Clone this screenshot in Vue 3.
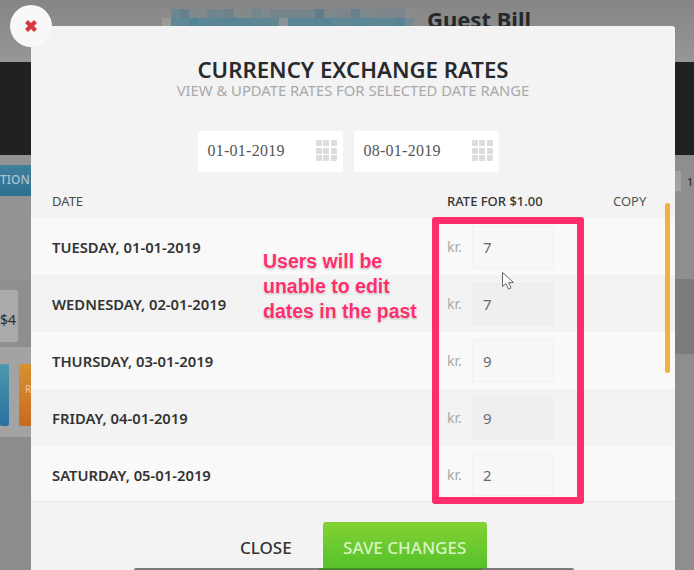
<template>
	<div class="screen">
		<!-- page behind the dialog -->
		<div class="backdrop">
			<div class="page-head">
				<div class="pixel-name">
					<div v-for="(row, r) in pixelRows" :key="r" class="pixel-row">
						<span
							v-for="(color, i) in row"
							:key="i"
							class="pixel"
							:style="{ background: color }"
						></span>
					</div>
				</div>
				<h2 class="guest-bill">Guest Bill</h2>
			</div>
			<div class="dark-band"></div>
			<div class="page-rest">
				<div class="left-side">
					<div class="tab-button">TION</div>
					<div class="price-card">$4</div>
					<div class="tiles">
						<div class="tile blue"></div>
						<div class="tile orange">R</div>
					</div>
				</div>
				<div class="right-side">
					<div class="page-chip"><span class="chip-box"></span>1</div>
					<div class="shade-band"></div>
				</div>
			</div>
		</div>

		<!-- dialog -->
		<div class="modal">
			<header class="modal-head">
				<h1 class="modal-title">CURRENCY EXCHANGE RATES</h1>
				<p class="modal-sub">VIEW &amp; UPDATE RATES FOR SELECTED DATE RANGE</p>
			</header>

			<div class="date-range">
				<div v-for="d in rangeDates" :key="d" class="date-input">
					<span class="date-value">{{ d }}</span>
					<span class="grid-icon"><i v-for="n in 9" :key="n"></i></span>
				</div>
			</div>

			<div class="table-head">
				<span class="col-date">DATE</span>
				<span class="col-rate">RATE FOR $1.00</span>
				<span class="col-copy">COPY</span>
			</div>

			<div class="table-body">
				<div
					v-for="(row, i) in rates"
					:key="row.date"
					class="rate-row"
					:class="{ odd: i % 2 === 1 }"
				>
					<span class="row-date">{{ row.date }}</span>
					<span class="currency">kr.</span>
					<span class="rate-input">{{ row.rate }}</span>
				</div>
			</div>

			<div class="scroll-thumb"></div>

			<footer class="modal-foot">
				<button class="close-btn">CLOSE</button>
				<button class="save-btn">SAVE CHANGES</button>
			</footer>

			<!-- annotation on top of the screenshot -->
			<div class="note-box"></div>
			<p class="note-text">Users will be<br />unable to edit<br />dates in the past</p>
			<svg class="cursor" width="16" height="22" viewBox="0 0 16 22">
				<path
					d="M1.5 1.5 L1.5 15.5 L5 12.5 L7.5 18 L10 17 L7.6 11.6 L12.5 11.5 Z"
					fill="#fff"
					stroke="#666"
					stroke-width="1"
					stroke-linejoin="round"
				/>
			</svg>
		</div>

		<button class="dismiss" aria-label="Close">
			<svg width="14" height="14" viewBox="0 0 14 14">
				<path
					d="M4 1 L7 4 L10 1 L13 4 L10 7 L13 10 L10 13 L7 10 L4 13 L1 10 L4 7 L1 4 Z"
					fill="#d8393c"
				/>
			</svg>
		</button>
		<div class="bottom-edge"></div>
	</div>
</template>

<script setup>
	const rangeDates = ["01-01-2019", "08-01-2019"];

	const rates = [
		{ date: "TUESDAY, 01-01-2019", rate: 7 },
		{ date: "WEDNESDAY, 02-01-2019", rate: 7 },
		{ date: "THURSDAY, 03-01-2019", rate: 9 },
		{ date: "FRIDAY, 04-01-2019", rate: 9 },
		{ date: "SATURDAY, 05-01-2019", rate: 2 },
	];

	// blurred out property name in the page header
	const pixelRows = [
		[
			"#8b8b8b", "#6b8791", "#64808a", "#81898c", "#82898c", "#6d858e", "#73868d", "#6c838c",
			"#84898b", "#82888b", "#72868e", "#7f888b", "#76858c", "#76858c", "#75858c", "#76858c",
			"#76858c", "#5f7d89", "#7f888b", "#7c878b", "#7b868b", "#66818b", "#7e878a", "#7f878a",
			"#7d868a", "#7d868a", "#7d868a", "#8b8b8b",
		],
		[
			"#9a9a9a", "#5f8796", "#5f8796", "#4f8496", "#5c8695", "#5c8695", "#5c8695", "#598494",
			"#598494", "#5b8695", "#5b8695", "#5b8695", "#648693", "#8b9497", "#5a8696", "#5a8696",
			"#5d8695", "#588595", "#588595", "#5e8797", "#5e8797", "#5b8696", "#5b8696", "#5e8796",
			"#5e8796", "#5e8796", "#568494", "#728a93",
		],
	];
</script>

<style scoped>
	.screen {
		position: relative;
		width: 694px;
		height: 570px;
		overflow: hidden;
		background: #8f8f8f;
		font-family: "Noto Sans", "Open Sans", sans-serif;
	}

	/* ---- page behind ---- */
	.backdrop {
		display: flex;
		flex-direction: column;
		height: 570px;
	}

	.page-head {
		display: flex;
		gap: 13px;
		height: 62px;
		box-sizing: border-box;
		padding: 9px 0 0 162px;
		background: linear-gradient(#858585, #979797);
	}

	.pixel-name {
		width: 252px;
	}

	.pixel-row {
		display: flex;
	}

	.pixel {
		width: 9px;
		height: 9px;
		flex-shrink: 0;
	}

	.guest-bill {
		margin: -2px 0 0;
		font-size: 22px;
		line-height: 24px;
		font-weight: 700;
		color: #25292b;
		white-space: nowrap;
	}

	.dark-band {
		height: 93px;
		background: #1f2123;
	}

	.page-rest {
		flex: 1;
		display: flex;
		justify-content: space-between;
		background: #8e8e8e;
	}

	.left-side {
		width: 31px;
		overflow: hidden;
		background: linear-gradient(
			#939393 0 125px,
			#8f8f8f 125px 192px,
			#a3a3a3 192px 282px,
			#8c8c8c 282px
		);
	}

	.tab-button {
		height: 31px;
		margin-top: 10px;
		padding-right: 2px;
		background: linear-gradient(#3f7f9c, #2f6f92);
		color: #a9c6d3;
		font-size: 12px;
		font-weight: 500;
		line-height: 29px;
		text-align: right;
		white-space: nowrap;
	}

	.price-card {
		width: 18px;
		height: 52px;
		margin-top: 94px;
		box-sizing: border-box;
		padding: 20px 5px 0 0;
		background: #aaaaaa;
		border-radius: 0 2px 2px 0;
		font-size: 14px;
		line-height: 20px;
		color: #2e2e2e;
		text-align: right;
		overflow: hidden;
		white-space: nowrap;
	}

	.tiles {
		display: flex;
		gap: 10px;
		margin-top: 22px;
	}

	.tile {
		height: 62px;
		border-radius: 2px;
	}

	.tile.blue {
		width: 9px;
		flex-shrink: 0;
		background: linear-gradient(#4b99ad, #2b6f9f);
	}

	.tile.orange {
		width: 20px;
		flex-shrink: 0;
		padding-left: 6px;
		box-sizing: border-box;
		background: linear-gradient(#d8902f, #c76b21);
		color: #e6c9a7;
		font-size: 10px;
		line-height: 50px;
		overflow: hidden;
	}

	.right-side {
		width: 19px;
	}

	.page-chip {
		display: flex;
		align-items: center;
		gap: 6px;
		height: 20px;
		margin-top: 16px;
		font-size: 11px;
		color: #222;
	}

	.chip-box {
		width: 6px;
		height: 20px;
		background: #a2a2a2;
	}

	.shade-band {
		height: 75px;
		margin-top: 88px;
		background: #7c7c7c;
	}

	/* ---- dialog ---- */
	.modal {
		position: absolute;
		left: 31px;
		top: 26px;
		display: flex;
		flex-direction: column;
		width: 644px;
		height: 544px;
		overflow: hidden;
		background: #f3f3f3;
		border-radius: 3px 3px 0 0;
	}

	.modal > * {
		flex-shrink: 0;
	}

	.modal-head {
		padding-top: 32px;
		text-align: center;
	}

	.modal-title {
		margin: 0;
		font-size: 22.2px;
		line-height: 24px;
		font-weight: 600;
		color: #27292b;
	}

	.modal-sub {
		margin: 0;
		font-size: 14.8px;
		line-height: 16px;
		font-weight: 400;
		color: #a9a9a9;
	}

	.date-range {
		display: flex;
		justify-content: center;
		gap: 11px;
		margin-top: 33px;
		padding-right: 10px;
	}

	.date-input {
		display: flex;
		align-items: center;
		justify-content: space-between;
		width: 145px;
		height: 41px;
		box-sizing: border-box;
		padding: 0 6px 2px 10px;
		background: #fff;
		border-radius: 2px;
	}

	.date-value {
		font-family: "Liberation Serif", serif;
		font-size: 16px;
		color: #555;
		letter-spacing: 0.25px;
	}

	.grid-icon {
		display: grid;
		grid-template-columns: repeat(3, 6px);
		grid-auto-rows: 6px;
		gap: 1.5px;
	}

	.grid-icon i {
		background: #dcdcdc;
		border-radius: 1px;
	}

	.table-head {
		display: flex;
		align-items: center;
		height: 29px;
		margin-top: 14px;
		padding-left: 21px;
		font-size: 13px;
		color: #4a4a4a;
	}

	.col-date {
		width: 395px;
	}

	.col-rate {
		width: 166px;
		font-weight: 500;
		color: #333;
	}

	.col-copy {
		color: #555;
	}

	.table-body {
		height: 283px;
		margin-top: 3px;
		overflow: hidden;
		border-bottom: 1px solid #e6e6e6;
	}

	.rate-row {
		display: flex;
		align-items: center;
		height: 57px;
		padding-left: 21px;
		box-sizing: border-box;
		background: #f9f9f9;
	}

	.rate-row.odd {
		background: #f3f3f3;
	}

	.row-date {
		width: 395px;
		font-size: 14.8px;
		font-weight: 600;
		color: #333;
	}

	.currency {
		width: 25px;
		font-size: 14px;
		color: #a9a9a9;
	}

	.rate-input {
		width: 82px;
		height: 42px;
		box-sizing: border-box;
		padding-left: 10px;
		background: #f8f8f8;
		border: 1px solid #f1f1f1;
		font-size: 15px;
		line-height: 41px;
		color: #6a6a6a;
	}

	.rate-row.odd .rate-input {
		background: #efefef;
		border-color: #ededed;
	}

	.scroll-thumb {
		position: absolute;
		left: 634px;
		top: 177px;
		width: 5px;
		height: 170px;
		border-radius: 3px;
		background: #f0b13e;
	}

	.modal-foot {
		display: flex;
		align-items: flex-start;
		gap: 31px;
		padding: 20px 0 0 209px;
	}

	.close-btn,
	.save-btn {
		font-family: inherit;
		border: none;
		cursor: pointer;
		font-size: 17px;
		font-weight: 500;
	}

	.close-btn {
		height: 50px;
		padding: 0;
		background: none;
		color: #333;
	}

	.save-btn {
		width: 164px;
		height: 50px;
		padding: 0;
		background: linear-gradient(#83d233, #52c029);
		border-radius: 3px 3px 0 0;
		color: #d9f3c4;
	}

	/* ---- overlays ---- */
	.note-box {
		position: absolute;
		left: 401px;
		top: 191px;
		width: 152px;
		height: 287px;
		box-sizing: border-box;
		border: 7px solid #ff2d6b;
		border-radius: 3px;
	}

	.note-text {
		position: absolute;
		left: 232px;
		top: 223px;
		margin: 0;
		font-family: "Liberation Sans", Arial, sans-serif;
		font-size: 19.5px;
		line-height: 25px;
		font-weight: 700;
		color: #ff2d6b;
		white-space: nowrap;
		text-shadow: 0 0 2px #fff, 0 0 2px #fff, 0 1px 2px rgba(0, 0, 0, 0.4);
	}

	.cursor {
		position: absolute;
		left: 470px;
		top: 245px;
	}

	.dismiss {
		position: absolute;
		left: 10px;
		top: 5px;
		display: flex;
		align-items: center;
		justify-content: center;
		width: 42px;
		height: 42px;
		padding: 0;
		border: none;
		border-radius: 50%;
		background: #f8f8f8;
	}

	.bottom-edge {
		position: absolute;
		left: 134px;
		bottom: 0;
		width: 440px;
		height: 2px;
		border-radius: 2px 2px 0 0;
		background: linear-gradient(90deg, #7a7a7a 0 42%, #3d8a2a 42% 79%, #7a7a7a 79%);
	}
</style>
